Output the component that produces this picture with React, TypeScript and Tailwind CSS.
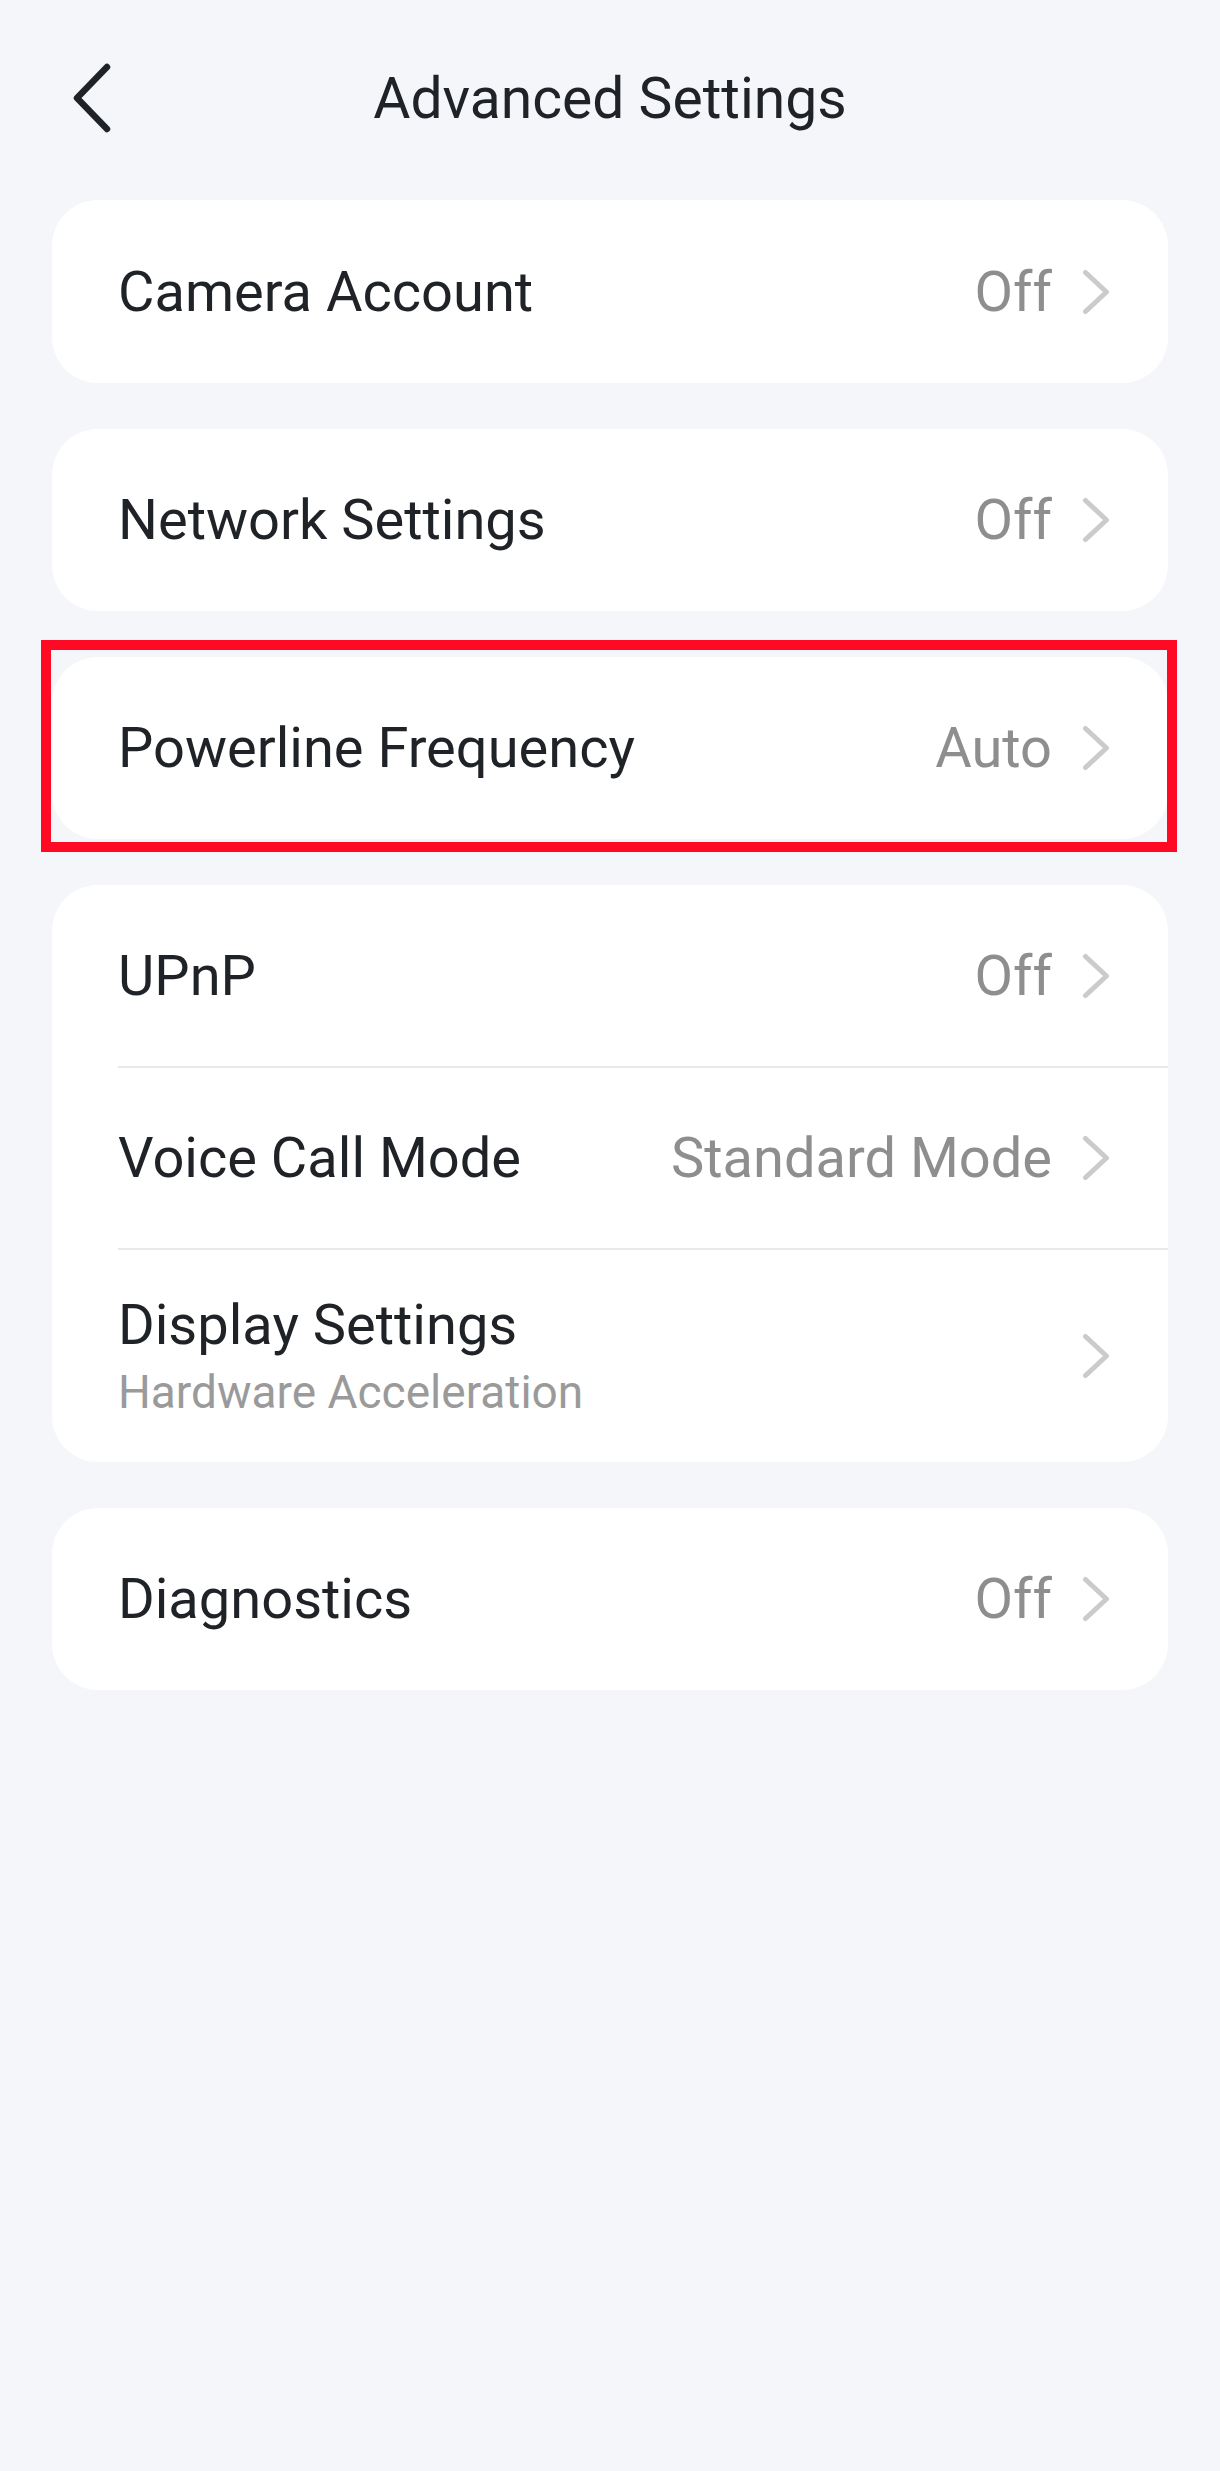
import type { ReactNode } from 'react';

type Item = {
  title: string;
  value?: string;
  subtitle?: string;
  height: string;
};

const groups: { items: Item[]; highlighted?: boolean }[] = [
  { items: [{ title: 'Camera Account', value: 'Off', height: 'h-[183px]' }] },
  { items: [{ title: 'Network Settings', value: 'Off', height: 'h-[182px]' }] },
  { items: [{ title: 'Powerline Frequency', value: 'Auto', height: 'h-[182px]' }], highlighted: true },
  {
    items: [
      { title: 'UPnP', value: 'Off', height: 'h-[181px]' },
      { title: 'Voice Call Mode', value: 'Standard Mode', height: 'h-[182px]' },
      { title: 'Display Settings', subtitle: 'Hardware Acceleration', height: 'h-[214px]' },
    ],
  },
  { items: [{ title: 'Diagnostics', value: 'Off', height: 'h-[182px]' }] },
];

function Chevron() {
  return (
    <svg width="28" height="46" viewBox="0 0 28 46" fill="none" className="shrink-0">
      <polyline
        points="3.5,3.5 24.5,23 3.5,42.5"
        stroke="#cbcbcb"
        strokeWidth="5"
        strokeLinecap="round"
        strokeLinejoin="round"
      />
    </svg>
  );
}

function Row({ item, first }: { item: Item; first: boolean }) {
  return (
    <div className={`pl-[66px] ${item.height}`}>
      <div
        className={`flex h-full items-center justify-between pr-[58px] ${
          first ? '' : 'border-t-2 border-[#e9e9eb]'
        }`}
      >
        <div className="flex flex-col gap-[16px]">
          <span className="text-[56px] leading-none text-[#1f2226]">{item.title}</span>
          {item.subtitle && (
            <span className="text-[46px] leading-none text-[#9a9a9a]">{item.subtitle}</span>
          )}
        </div>
        <div className="flex items-center gap-[30px]">
          {item.value && <span className="text-[56px] leading-none text-[#8e8e8e]">{item.value}</span>}
          <Chevron />
        </div>
      </div>
    </div>
  );
}

function Card({ children, highlighted }: { children: ReactNode; highlighted?: boolean }) {
  return (
    <div className="relative">
      <div className="overflow-hidden rounded-[46px] bg-white">{children}</div>
      {/* annotation frame */}
      {highlighted && (
        <div className="pointer-events-none absolute -top-[17px] -left-[11px] -right-[9px] -bottom-[13px] border-[10px] border-[#ff0a24]" />
      )}
    </div>
  );
}

export default function App() {
  return (
    <div className="min-h-[2471px] bg-[#f5f6fa]" style={{ fontFamily: 'Roboto, "Noto Sans", sans-serif' }}>
      {/* Header */}
      <div className="grid h-[196px] grid-cols-[1fr_auto_1fr] items-center">
        <div className="pl-[71px]">
          <svg width="42" height="72" viewBox="0 0 42 72" fill="none">
            <polyline
              points="36,5 6,36 36,67"
              stroke="#1f2226"
              strokeWidth="6.5"
              strokeLinecap="round"
              strokeLinejoin="round"
            />
          </svg>
        </div>
        <h1 className="text-[57px] font-normal leading-none text-[#1f2226]">Advanced Settings</h1>
        <div />
      </div>

      {/* Setting groups */}
      <div className="flex flex-col gap-[46px] px-[52px] pt-[4px]">
        {groups.map((g, gi) => (
          <Card key={gi} highlighted={g.highlighted}>
            {g.items.map((item, i) => (
              <Row key={item.title} item={item} first={i === 0} />
            ))}
          </Card>
        ))}
      </div>
    </div>
  );
}
